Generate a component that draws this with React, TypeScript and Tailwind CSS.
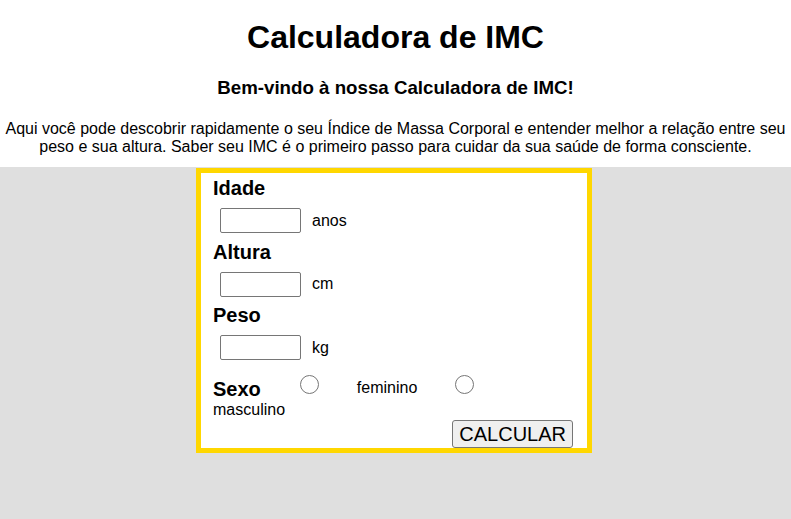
import React from "react";

const font = { fontFamily: '"Liberation Sans", Arial, sans-serif' };

function Field({ label, unit }: { label: string; unit: string }) {
  return (
    <div className="flex flex-col">
      <span className="text-[20px] font-bold leading-[23px]">{label}</span>
      <div className="mt-[8px] mb-[7.5px] flex items-center">
        <input
          type="text"
          className="ml-[7px] h-[25px] w-[81px] rounded-[2px] border border-[#767676] bg-white"
        />
        <span className="ml-[11px] text-[16px] leading-[18px]">{unit}</span>
      </div>
    </div>
  );
}

export default function App() {
  return (
    <div className="flex min-h-screen flex-col bg-white text-black" style={font}>
      {/* cabeçalho */}
      <header className="flex flex-col items-center text-center">
        <h1 className="mt-[19px] text-[32px] font-bold leading-[37px]">Calculadora de IMC</h1>
        <h3 className="mt-[21px] text-[18.72px] font-bold leading-[22px]">
          Bem-vindo à nossa Calculadora de IMC!
        </h3>
        <p className="mt-[21px] mb-[11px] text-[16px] leading-[18px]">
          Aqui você pode descobrir rapidamente o seu Índice de Massa Corporal e entender melhor a relação entre seu
          peso e sua altura. Saber seu IMC é o primeiro passo para cuidar da sua saúde de forma consciente.
        </p>
      </header>

      {/* área cinza com o formulário */}
      <main className="flex flex-1 justify-center bg-[#dfdfdf] pt-[1px] pr-[3px]">
        <form className="flex h-[285px] w-[396px] flex-col border-[5px] border-[#ffd700] bg-white pl-[12px] pr-[14px] pt-[4px]">
          <Field label="Idade" unit="anos" />
          <Field label="Altura" unit="cm" />
          <Field label="Peso" unit="kg" />

          <div className="mt-[10px] flex items-start">
            <span className="text-[20px] font-bold leading-[23px]">Sexo</span>
            <input
              type="radio"
              name="sexo"
              className="ml-[39px] -mt-[3px] h-[19px] w-[19px] appearance-none rounded-full border border-[#767676] bg-white"
            />
            <span className="ml-[38px] mt-[1px] text-[16px] leading-[18px]">feminino</span>
            <input
              type="radio"
              name="sexo"
              className="ml-[38px] -mt-[3px] h-[19px] w-[19px] appearance-none rounded-full border border-[#767676] bg-white"
            />
          </div>
          <span className="text-[16px] leading-[18px]">masculino</span>

          <div className="mt-auto flex justify-end">
            <button
              type="button"
              className="h-[28px] rounded-[3px] border border-[#767676] bg-[#efefef] px-[6px] text-[20px] leading-[22px]"
            >
              CALCULAR
            </button>
          </div>
        </form>
      </main>
    </div>
  );
}
